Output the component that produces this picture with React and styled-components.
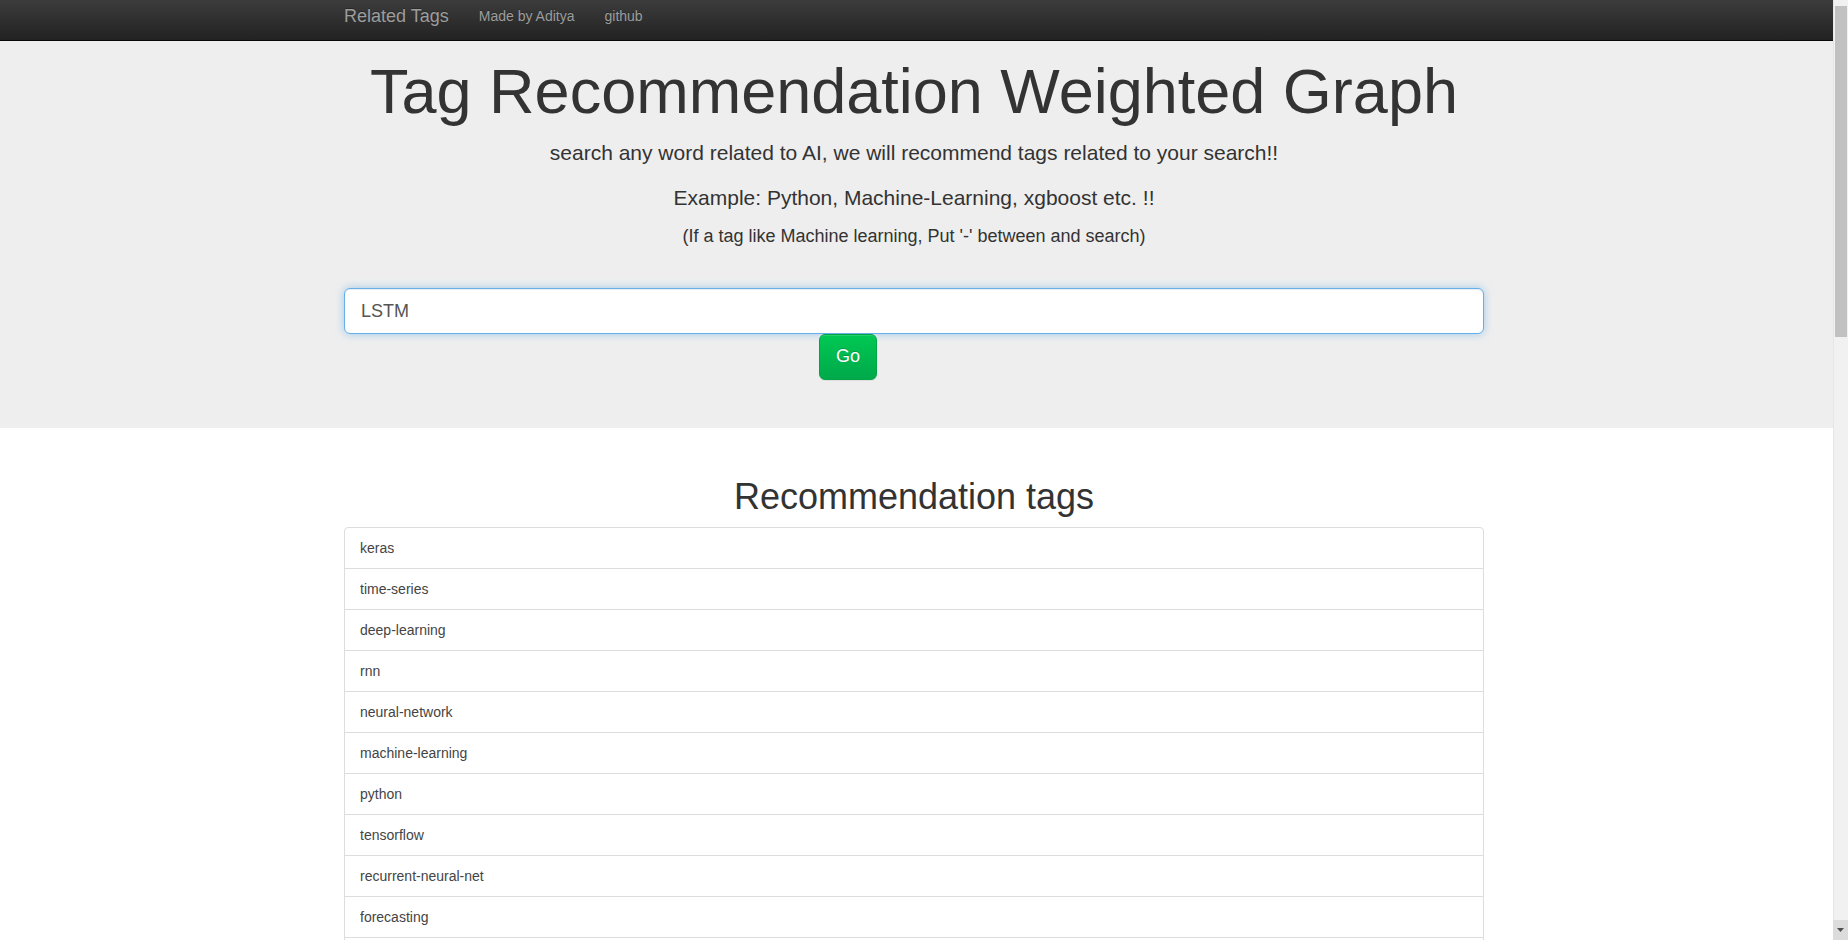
import React from "react";
import styled, { createGlobalStyle } from "styled-components";

const GlobalStyle = createGlobalStyle`
  html, body { margin: 0; padding: 0; }
  html { scrollbar-width: none; }
  ::-webkit-scrollbar { display: none; }
  body {
    font-family: "Liberation Sans", Arial, Helvetica, sans-serif;
    font-size: 14px;
    line-height: 1.42857;
    color: #333;
    background: #fff;
  }
  * { box-sizing: border-box; }
`;

const Page = styled.div`
  margin-right: 15px;
`;

const Navbar = styled.nav`
  height: 41px;
  background: linear-gradient(to bottom, #3c3c3c 0%, #222 100%);
  border-bottom: 1px solid #080808;
`;

const Container = styled.div`
  width: 1145px;
  padding-right: 5px;
  margin: 0 auto;
`;

const NavInner = styled(Container)`
  display: flex;
  align-items: flex-start;
  padding-top: 6px;
`;

const Brand = styled.a`
  font-size: 18px;
  line-height: 20px;
  color: #9d9d9d;
  text-decoration: none;
  padding-right: 15px;
  text-shadow: 0 -1px 0 rgba(0, 0, 0, 0.25);
`;

const NavLink = styled.a`
  font-size: 14px;
  line-height: 20px;
  color: #9d9d9d;
  text-decoration: none;
  padding: 0 15px;
  text-shadow: 0 -1px 0 rgba(0, 0, 0, 0.25);
`;

const Jumbotron = styled.section`
  background: #eee;
  padding: 16px 0 48px;
  margin-bottom: 49px;
`;

const Title = styled.h1`
  margin: 0 0 12px;
  font-size: 63px;
  line-height: 1.1;
  font-weight: 500;
  text-align: center;
  color: #333;
`;

const Lead = styled.p`
  margin: 0 0 ${(p) => (p.$mb ?? 15)}px;
  font-size: ${(p) => p.$size || 21}px;
  line-height: 1.4;
  font-weight: 200;
  text-align: center;
`;

const SearchForm = styled.form`
  margin-top: 39px;
`;

const SearchInput = styled.input`
  display: block;
  width: 100%;
  height: 46px;
  padding: 0 16px;
  font-family: inherit;
  font-size: 18px;
  color: #555;
  background: #fff;
  border: 1px solid #66afe9;
  border-radius: 6px;
  outline: none;
  box-shadow: inset 0 1px 1px rgba(0, 0, 0, 0.075), 0 0 8px rgba(102, 175, 233, 0.6);
`;

const GoButton = styled.button`
  display: block;
  margin-left: 475px;
  height: 46px;
  padding: 0 16px;
  font-family: inherit;
  font-size: 18px;
  line-height: 1.33;
  color: #fff;
  background: linear-gradient(to bottom, #00c853 0%, #00a94a 100%);
  border: 1px solid #00a548;
  border-radius: 6px;
  text-shadow: 0 -1px 0 rgba(0, 0, 0, 0.2);
  box-shadow: inset 0 1px 0 rgba(255, 255, 255, 0.15), 0 1px 1px rgba(0, 0, 0, 0.075);
  cursor: pointer;
`;

const SectionTitle = styled.h1`
  margin: 0 0 10px;
  font-size: 36px;
  line-height: 1.1;
  font-weight: 500;
  text-align: center;
  color: #333;
`;

const List = styled.ul`
  list-style: none;
  margin: 0 0 20px;
  padding: 0;
`;

const Item = styled.li`
  padding: 10px 15px;
  line-height: 20px;
  font-size: 14px;
  color: #444;
  background: #fff;
  border: 1px solid #ddd;
  margin-bottom: -1px;
  &:first-child {
    border-top-left-radius: 4px;
    border-top-right-radius: 4px;
  }
  &:last-child {
    margin-bottom: 0;
    border-bottom-left-radius: 4px;
    border-bottom-right-radius: 4px;
  }
`;

/* window scrollbar drawn over the right edge */
const Scrollbar = styled.div`
  position: fixed;
  top: 0;
  right: 0;
  width: 15px;
  height: 100vh;
  display: flex;
  flex-direction: column;
  background: #f1f1f1;
  border-left: 1px solid #e6e6e6;
`;

const ScrollTop = styled.div`
  height: 6px;
  flex: none;
`;

const Thumb = styled.div`
  flex: none;
  height: 331px;
  margin: 0 1px 0 1px;
  background: #c1c1c1;
`;

const Track = styled.div`
  flex: 1;
`;

const ArrowButton = styled.div`
  flex: none;
  height: 20px;
  margin-left: -1px;
  display: flex;
  align-items: center;
  justify-content: center;
  background: #dcdcdc;
`;

const tags = [
  "keras", "time-series", "deep-learning", "rnn", "neural-network",
  "machine-learning", "python", "tensorflow", "recurrent-neural-net", "forecasting",
  "sequence-to-sequence", "prediction", "pytorch", "nlp", "data-science",
  "regression", "classification", "cnn", "gru", "attention-mechanism",
  "word-embeddings", "text-classification", "sentiment-analysis", "autoencoder", "training",
  "loss-function", "overfitting", "dropout", "batch-normalization", "hyperparameter",
  "optimization", "backpropagation", "gradient-descent", "scikit-learn", "pandas",
  "numpy", "feature-engineering", "preprocessing", "normalization", "anomaly-detection",
  "arima", "multivariate", "encoder-decoder", "transformer", "word2vec",
  "speech-recognition", "convolution", "cross-validation", "learning-rate", "batch-size",
];

export default function App() {
  return (
    <>
      <GlobalStyle />
      <Page>
        <Navbar>
          <NavInner>
            <Brand href="#">Related Tags</Brand>
            <NavLink href="#">Made by Aditya</NavLink>
            <NavLink href="#">github</NavLink>
          </NavInner>
        </Navbar>
        <Jumbotron>
          <Container>
            <Title>Tag Recommendation Weighted Graph</Title>
            <Lead>search any word related to AI, we will recommend tags related to your search!!</Lead>
            <Lead $mb={12}>Example: Python, Machine-Learning, xgboost etc. !!</Lead>
            <Lead $size={18} $mb={0}>(If a tag like Machine learning, Put '-' between and search)</Lead>
            <SearchForm onSubmit={(e) => e.preventDefault()}>
              <SearchInput defaultValue="LSTM" />
              <GoButton type="submit">Go</GoButton>
            </SearchForm>
          </Container>
        </Jumbotron>
        <Container>
          <SectionTitle>Recommendation tags</SectionTitle>
          <List>
            {tags.map((t) => (
              <Item key={t}>{t}</Item>
            ))}
          </List>
        </Container>
      </Page>
      <Scrollbar aria-hidden="true">
        <ScrollTop />
        <Thumb />
        <Track />
        <ArrowButton>
          <svg width="7" height="4" viewBox="0 0 7 4">
            <path d="M0 0 L7 0 L3.5 4 Z" fill="#505050" />
          </svg>
        </ArrowButton>
      </Scrollbar>
    </>
  );
}
